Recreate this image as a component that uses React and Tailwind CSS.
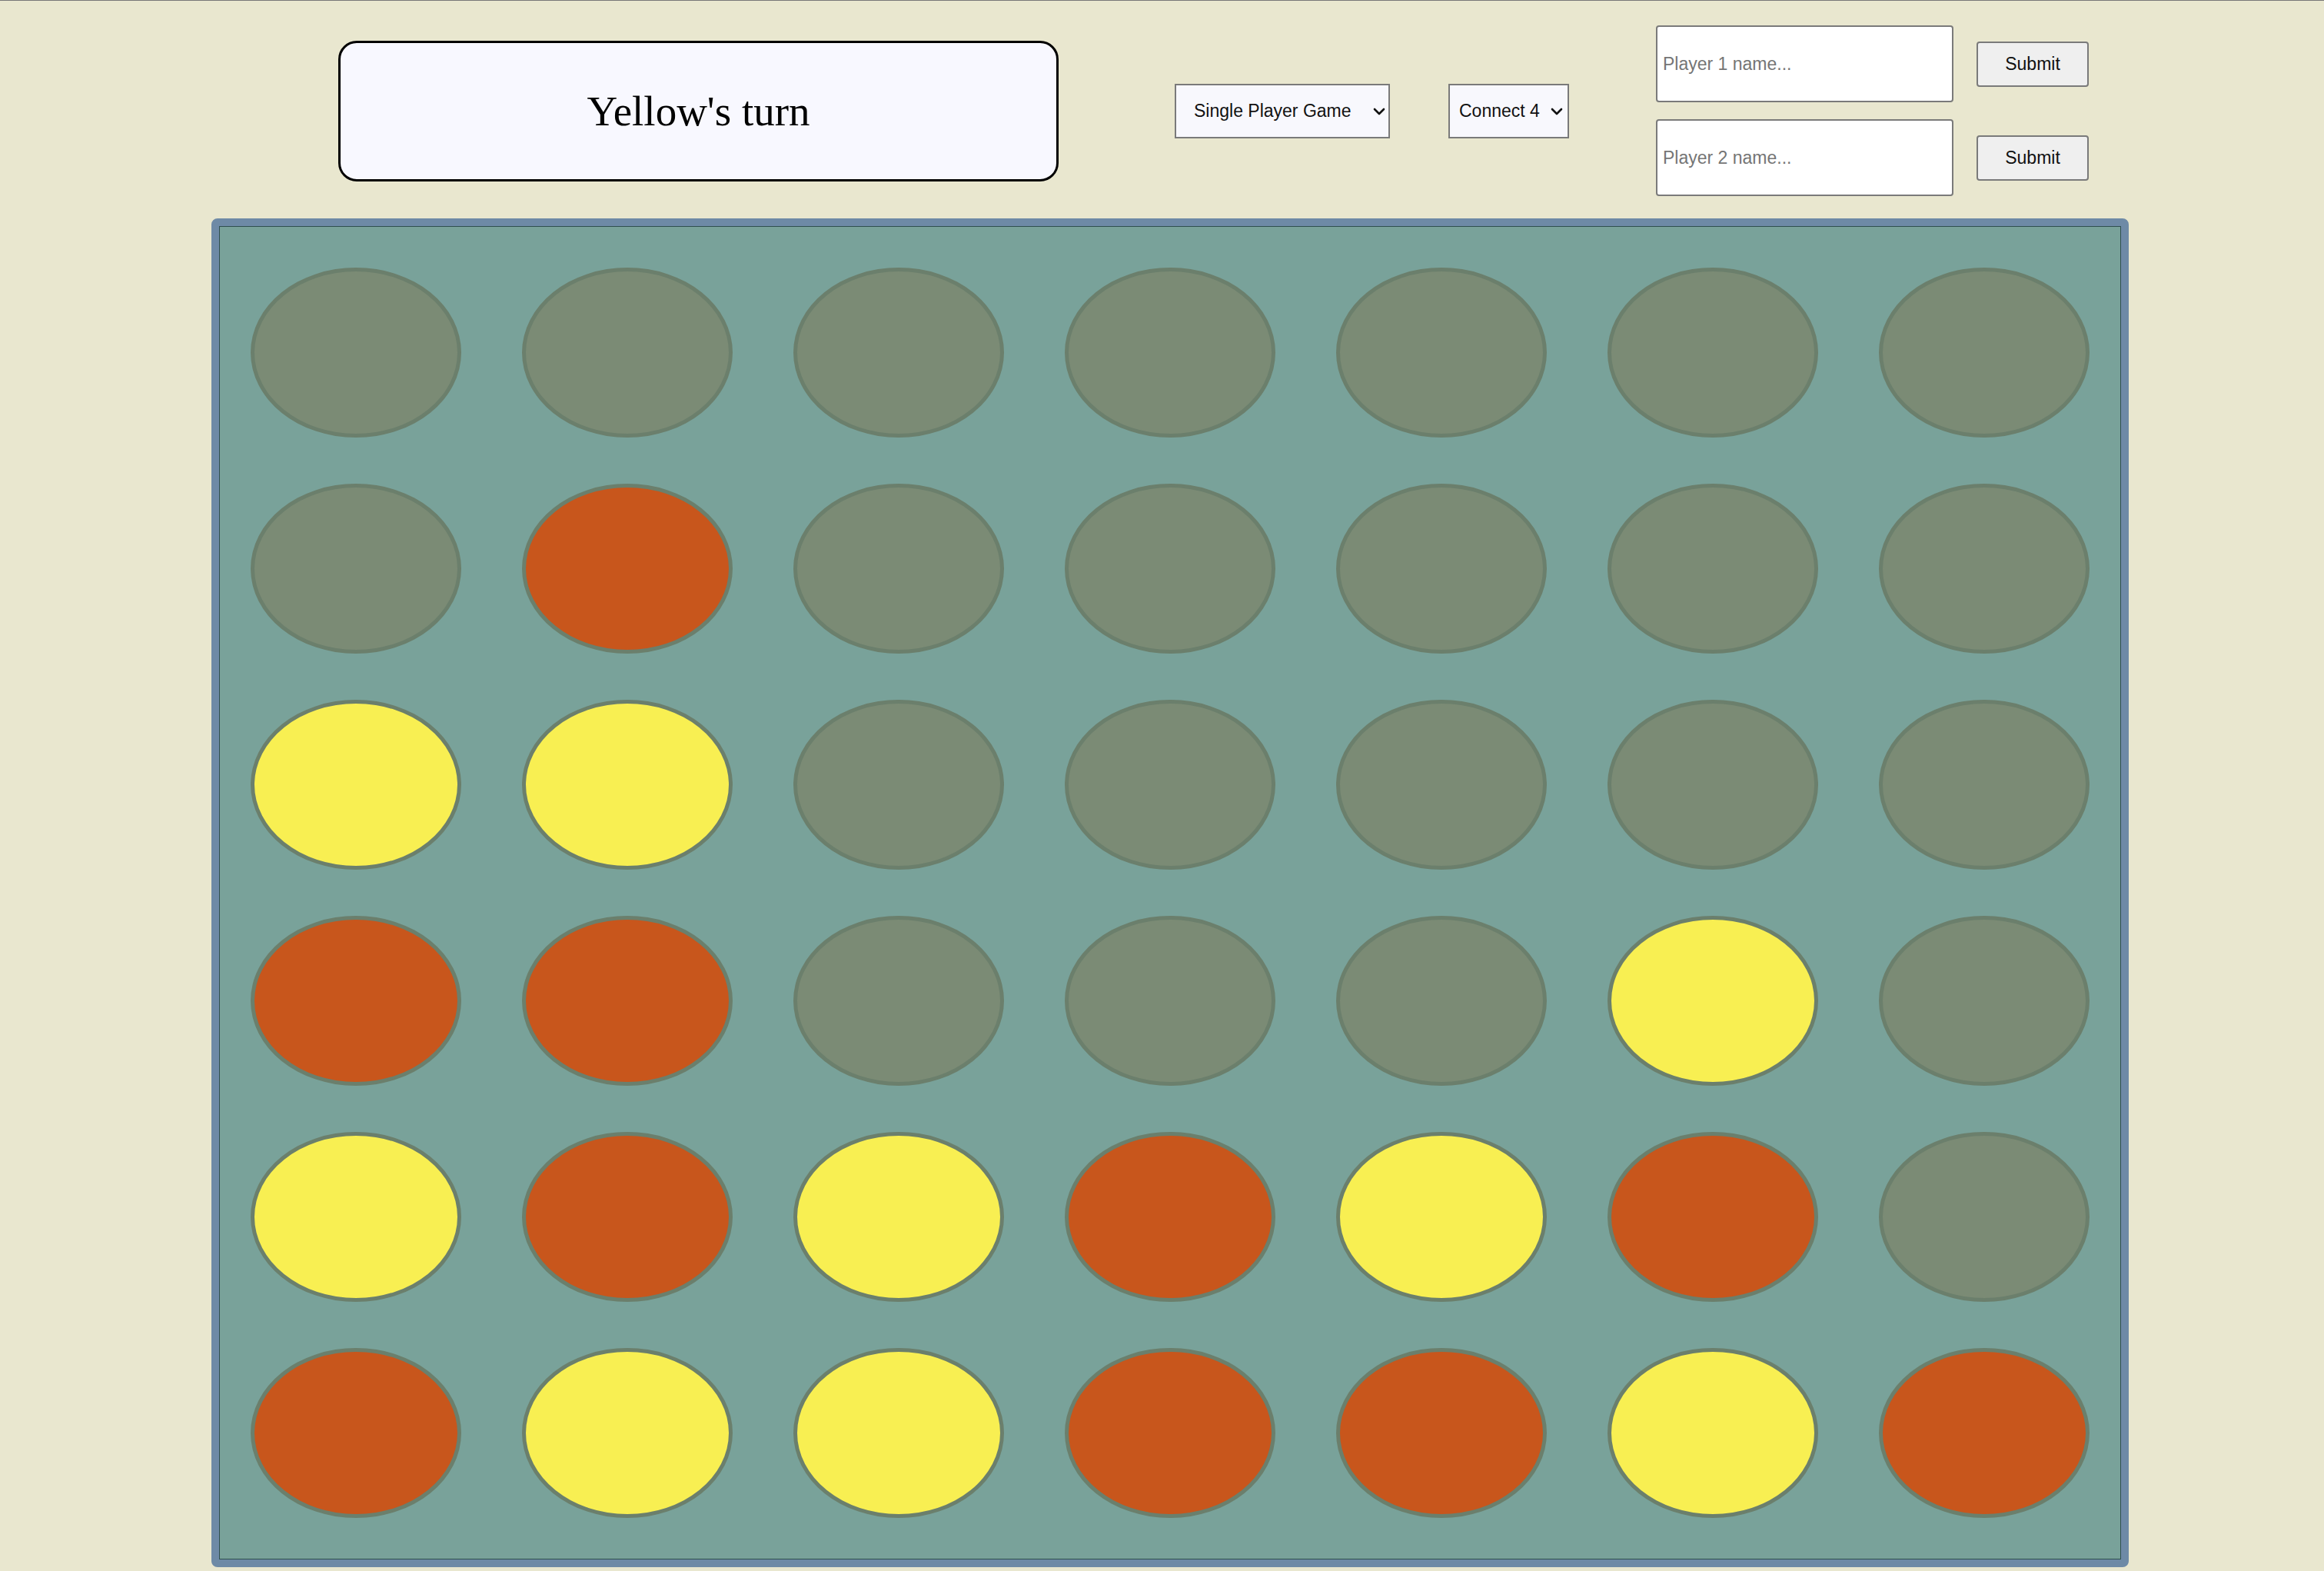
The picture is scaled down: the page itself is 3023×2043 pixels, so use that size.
import React from "react";

const BOARD = [
  "EEEEEEE",
  "EREEEEE",
  "YYEEEEE",
  "RREEEYE",
  "YRYRYRE",
  "RYYRRYR",
];

function Disc({ v }) {
  const fill =
    v === "R" ? "bg-[#c8561c]" : v === "Y" ? "bg-[#f8ef52]" : "bg-[#7b8b75]";
  return (
    <div
      className={`w-[274px] h-[221px] rounded-[50%] border-[5px] border-[#6b7f6c] ${fill}`}
    />
  );
}

function Chevron({ className }) {
  return (
    <svg
      className={className}
      width="16"
      height="10"
      viewBox="0 0 16 10"
      fill="none"
      stroke="#111"
      strokeWidth="2.6"
      strokeLinecap="round"
      strokeLinejoin="round"
    >
      <path d="M2 2 L8 8 L14 2" />
    </svg>
  );
}

function Select({ widthClass, padClass, options, chevronClass }) {
  return (
    <div className={`relative ${widthClass} h-[71px]`}>
      <select
        className={`appearance-none w-full h-full bg-[#f8f8fd] border-2 border-[#7a7a7a] rounded-none ${padClass} text-[23px] text-[#111] font-['Liberation_Sans',Arial,sans-serif] outline-none`}
        defaultValue={options[0]}
      >
        {options.map((o) => (
          <option key={o}>{o}</option>
        ))}
      </select>
      <Chevron className={`absolute top-[31px] pointer-events-none ${chevronClass}`} />
    </div>
  );
}

function NameRow({ placeholder }) {
  return (
    <div className="flex items-center gap-[30px]">
      <input
        placeholder={placeholder}
        className="w-[387px] h-[100px] bg-white border-2 border-[#7a7a7a] rounded-[4px] px-[7px] text-[23px] font-['Liberation_Sans',Arial,sans-serif] placeholder:text-[#757575] outline-none"
      />
      <button className="w-[146px] h-[59px] bg-[#efefef] border-2 border-[#7a7a7a] rounded-[4px] text-[23px] text-[#111] font-['Liberation_Sans',Arial,sans-serif]">
        Submit
      </button>
    </div>
  );
}

export default function App() {
  return (
    <div className="w-full min-h-[2043px] bg-[#e9e7cf] border-t border-[#777777]">
      <div className="flex items-center h-[283px] pt-[3px]">
        <div className="ml-[440px] w-[937px] h-[183px] border-[3px] border-black rounded-[24px] bg-[#f8f8ff] flex items-center justify-center">
          <span className="text-[55px] leading-none text-black font-['Liberation_Serif','Times_New_Roman',serif]">
            Yellow's turn
          </span>
        </div>
        <div className="ml-[151px]">
          <Select
            widthClass="w-[280px]"
            padClass="pl-[23px]"
            options={["Single Player Game", "Two Player Game"]}
            chevronClass="left-[258px]"
          />
        </div>
        <div className="ml-[76px]">
          <Select
            widthClass="w-[157px]"
            padClass="pl-[12px]"
            options={["Connect 4", "Connect 5"]}
            chevronClass="left-[133px]"
          />
        </div>
        <div className="ml-[113px] flex flex-col gap-[22px]">
          <NameRow placeholder="Player 1 name..." />
          <NameRow placeholder="Player 2 name..." />
        </div>
      </div>
      <div className="ml-[275px] w-[2494px] h-[1754px] border-[10px] border-[#6e8aa6] rounded-[8px]">
        <div className="h-full border border-[#2f4f4f] bg-[#79a29a] grid grid-cols-7 py-[23px]">
          {Array.from({ length: 7 }).map((_, c) => (
            <div key={c} className="flex flex-col">
              {BOARD.map((row, r) => (
                <div key={r} className="h-[281px] flex items-center justify-center">
                  <Disc v={row[c]} />
                </div>
              ))}
            </div>
          ))}
        </div>
      </div>
    </div>
  );
}
